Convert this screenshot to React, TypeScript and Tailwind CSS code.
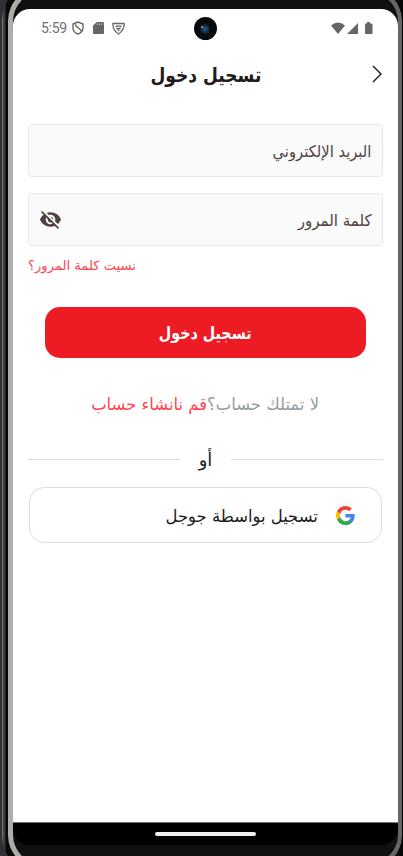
import React from "react";

type LabelProps = { children: React.ReactNode; className: string };

function Label({ children, className }: LabelProps) {
  return <span dir="rtl" className={`inline-block whitespace-nowrap ${className}`}>{children}</span>;
}

function StatusBar() {
  return (
    <div className="flex h-[38px] shrink-0 items-center bg-white pl-[28px] pr-[25px] text-[#666]">
      <span className="w-[26px] font-['Roboto',sans-serif] text-[14px] leading-none tracking-[-0.3px] text-[#707070]">5:59</span>
      <svg className="ml-[5px]" width="12" height="14" viewBox="0 0 12 14" fill="none" stroke="currentColor" strokeWidth="1.4">
        <path d="M6 1 1 3v4c0 3 2 5 5 6 3-1 5-3 5-6V3zM3.5 3.2c0 4 5 3 5.5 7" />
      </svg>
      <svg className="ml-[9px]" width="11" height="12" viewBox="0 0 10 12" preserveAspectRatio="none" fill="currentColor">
        <path fillRule="evenodd" d="M3.5 0H9q1 0 1 1v10q0 1-1 1H1q-1 0-1-1V3.5zM3.8 1.500v1.500h.6v-1.500zm2 0v1.500h.6v-1.500zm2 0v1.500h.6v-1.500z" />
      </svg>
      <svg className="ml-[8px]" width="13" height="13" viewBox="0 0 13 13" fill="none" stroke="currentColor" strokeWidth="1.3">
        <path d="M.9 1.500h11.200c.2 4-2 8-5.600 10.500C2.900 9.500.7 5.500.9 1.500zM3.500 4.700q3-1.500 6 0M4.300 6.500h4.400" />
        <path d="M5 7.500h3L6.500 9.500z" fill="currentColor" stroke="none" />
      </svg>
      <span className="relative ml-[69px] size-[23px] rounded-full bg-[#080a0d]">
        <i className="absolute left-[6px] top-[7px] size-[10px] rounded-full bg-[radial-gradient(circle,#245f92,#14243d_55%,#080a0d)]" />
        <i className="absolute left-[7px] top-[9px] size-[2px] rounded-full bg-[#9aa5ad]" />
      </span>
      <svg className="ml-auto" width="42" height="13" viewBox="0 0 42 13" fill="currentColor">
        <path d="M0 3.500Q7-2.500 14 3.500L7 12zM16 12 27 1v11zM34 2.500q0-1 1-1h1V0h3v1.500h1.500q1 0 1 1V11q0 1-1 1H35q-1 0-1-1z" />
      </svg>
    </div>
  );
}

function HiddenEye() {
  return (
    <svg width="23" height="23" viewBox="0 0 24 24" fill="#51413e">
      <path d="M12 7c2.760 0 5 2.240 5 5 0 .65-.13 1.260-.36 1.830l2.920 2.920c1.510-1.260 2.700-2.890 3.430-4.750-1.730-4.390-6-7.500-11-7.500-1.400 0-2.740.25-3.980.7l2.160 2.160C10.740 7.130 11.350 7 12 7zM2 4.270l2.280 2.280.46.46C3.080 8.300 1.780 10.020 1 12c1.730 4.390 6 7.500 11 7.500 1.550 0 3.030-.3 4.380-.84l.42.42L19.730 22 21 20.730 3.270 3 2 4.270zM7.530 9.800l1.550 1.550c-.05.21-.08.43-.08.650 0 1.660 1.340 3 3 3 .22 0 .44-.03.65-.08l1.550 1.550c-.67.33-1.410.53-2.200.53-2.760 0-5-2.240-5-5 0-.79.2-1.530.53-2.200zm4.310-.78 3.150 3.150.02-.16c0-1.660-1.340-3-3-3l-.17.010z" />
    </svg>
  );
}

function GoogleMark() {
  return (
    <svg width="19" height="19" viewBox="0 0 24 24">
      <path fill="#4285f4" d="M23.500 12.300c0-.8-.1-1.600-.2-2.300H12v4.500h6.500a5.500 5.500 0 0 1-2.400 3.600v3h3.900c2.300-2.100 3.500-5.200 3.500-8.800z" />
      <path fill="#34a853" d="M12 24c3.200 0 6-1.100 8-2.900l-3.900-3a7.200 7.200 0 0 1-10.800-3.800h-4v3.100A12 12 0 0 0 12 24z" />
      <path fill="#fbbc05" d="M5.300 14.300a7.200 7.200 0 0 1 0-4.600V6.600h-4a12 12 0 0 0 0 10.800z" />
      <path fill="#ea4335" d="M12 4.800c1.800 0 3.300.6 4.600 1.800L20 3.200A12 12 0 0 0 1.300 6.600l4 3.100A7.200 7.200 0 0 1 12 4.800z" />
    </svg>
  );
}

function PhoneBezel() {
  return (
    <div aria-hidden="true" className="absolute -bottom-[19px] -right-[9px] -top-[19px] left-[2px] rounded-[40px] bg-[linear-gradient(90deg,#777_0px,#777_1px,#444_1px,#383838_3px,#080808_4px,#080808_396px,#000_100%)] py-[6px] pl-[6px] pr-[10px]">
      <div className="h-full rounded-[34px] border-[5px] border-[#777] border-l-[#adadad] border-r-[4px] border-r-[#666] bg-[#101010]" />
    </div>
  );
}

export default function App() {
  return (
    <div className="relative h-[856px] w-[403px] overflow-hidden bg-[#303134] pt-[9px] font-['DejaVu_Sans',sans-serif]">
      <PhoneBezel />
      <div className="relative ml-[13px] flex h-[836px] w-[385px] flex-col overflow-hidden rounded-[17px] bg-black">
        <StatusBar />
        <header className="grid h-[54px] shrink-0 grid-cols-[1fr_auto_1fr] items-center bg-white">
          <i />
          <Label className="mt-[2px] origin-center scale-x-[0.855] text-[20px] font-bold leading-none text-[#231a1a]">تسجيل دخول</Label>
          <svg className="ml-auto mr-[16px]" width="10" height="18" viewBox="0 0 10 18" fill="none" stroke="#111" strokeWidth="1.3"><path d="m1 1 8 8-8 8" /></svg>
        </header>
        <main className="flex-1 bg-white px-[15px] pt-[23px]">
          <div className="flex h-[53px] items-center justify-end rounded-[4px] border border-[#e6e9e9] bg-[#f9fbfa] px-[11px]">
            <Label className="mt-[3px] origin-right scale-x-[0.92] text-[16px] text-[#51413e]">البريد الإلكتروني</Label>
          </div>
          <div className="mt-4 flex h-[53px] items-center justify-between rounded-[4px] border border-[#e6e9e9] bg-[#f9fbfa] px-[10px]">
            <HiddenEye />
            <Label className="mt-[3px] origin-right scale-x-[0.94] text-[16px] text-[#51413e]">كلمة المرور</Label>
          </div>
          <div className="flex h-[38px] items-center">
            <Label className="mt-px origin-left scale-x-[1.01] text-[13px] text-[#ff4550]">نسيت كلمة المرور؟</Label>
          </div>
          <button className="mx-[17px] mt-[23px] flex h-[51px] w-[321px] items-center justify-center rounded-[15px] bg-[#ed1c24]">
            <Label className="mt-[3px] scale-x-[0.84] text-[17px] font-bold text-white">تسجيل دخول</Label>
          </button>
          <div className="mt-[32px] flex h-[28px] items-center justify-center">
            <div className="mt-px flex scale-x-[0.965] text-[17px]">
              <Label className="text-[#ff4550]">قم نانشاء حساب</Label>
              <Label className="text-[#939d9e]">لا تمتلك حساب؟</Label>
            </div>
          </div>
          <div className="mt-[27px] flex h-[28px] items-center justify-between">
            <i className="h-px w-[152px] bg-[#dcdcdc]" />
            <Label className="text-[18px] text-[#231a1a]">أو</Label>
            <i className="h-px w-[152px] bg-[#dcdcdc]" />
          </div>
          <button className="ml-px mt-[14px] flex h-[56px] w-[353px] items-center justify-end rounded-[15px] border border-[#dcdcdc] pr-[26px]">
            <Label className="mr-[18px] mt-[3px] origin-right scale-x-[0.965] text-[17px] text-[#231a1a]">تسجيل بواسطة جوجل</Label>
            <GoogleMark />
          </button>
        </main>
        <div className="flex h-[23px] shrink-0 items-start justify-center border-t border-[#777] bg-black pt-[9px]">
          <i className="h-[4px] w-[101px] rounded-full bg-[#eee]" />
        </div>
      </div>
    </div>
  );
}
